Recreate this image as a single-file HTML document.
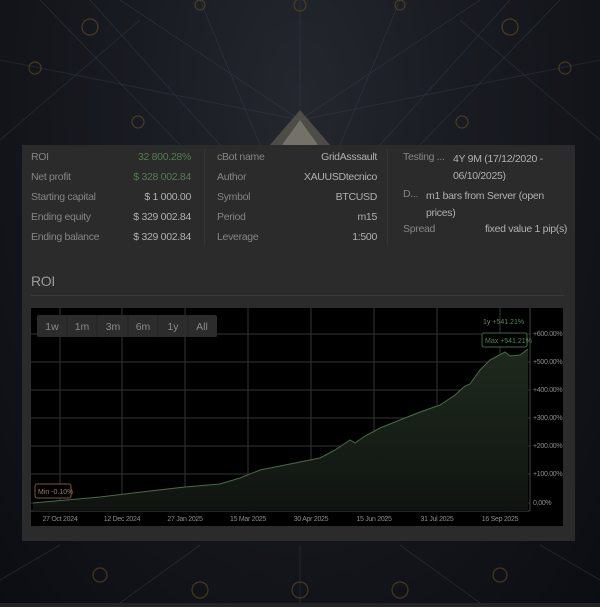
<!DOCTYPE html>
<html><head><meta charset="utf-8"><style>
*{margin:0;padding:0;box-sizing:border-box}
body{width:600px;height:607px;overflow:hidden;background:#121419;font-family:"Liberation Sans",sans-serif;position:relative}
.bg{position:absolute;left:0;top:0;width:600px;height:603px;background:radial-gradient(ellipse at 300px 100px,#24282e 0%,#181b21 40%,#0c0d12 100%)}
.strip{position:absolute;left:0;top:603px;width:600px;height:4px;background:#232323}
.panel{position:absolute;left:22px;top:145px;width:553px;height:396px;background:#2b2b2b}
.t{position:absolute;font-size:10.5px;color:#858585;white-space:nowrap;letter-spacing:-0.3px}
.v{color:#b0b0b0}
.g{color:#4f7d4f}
.sep{position:absolute;width:1px;background:#353535}
</style></head><body>
<div class="bg"></div>
<svg style="position:absolute;left:0;top:0" width="600" height="603">
<g stroke="#33404c" stroke-width="0.6" fill="none" opacity="0.7">
<path d="M300 0 L300 145 M300 120 L120 0 M300 120 L480 0 M300 120 L0 60 M300 120 L600 60 M200 0 L260 145 M400 0 L340 145 M90 0 L220 145 M510 0 L380 145 M0 140 L140 20 M600 140 L460 20 M40 0 L180 145 M560 0 L420 145"/>
<path d="M300 603 L300 545 M120 603 L200 545 M480 603 L400 545 M0 580 L60 545 M600 580 L540 545"/>
</g>
<g stroke="#6a5224" stroke-width="1.2" fill="none" opacity="0.6">
<circle cx="90" cy="27" r="8"/><circle cx="510" cy="27" r="8"/><circle cx="35" cy="68" r="6"/><circle cx="565" cy="68" r="6"/><circle cx="300" cy="5" r="6"/><circle cx="200" cy="5" r="5"/><circle cx="400" cy="5" r="5"/><circle cx="138" cy="122" r="6"/><circle cx="462" cy="122" r="6"/>
<circle cx="100" cy="575" r="7"/><circle cx="500" cy="575" r="7"/><circle cx="200" cy="590" r="8"/><circle cx="300" cy="590" r="8"/><circle cx="400" cy="590" r="8"/>
</g>
<path d="M300 110 L270 145 L330 145Z" fill="#6a6658" opacity="0.6"/>
<path d="M300 120 L282 145 L318 145Z" fill="#9a968a" opacity="0.5"/>
</svg>
<div class="strip"></div>
<div class="panel">
<div class="t" style="left:9px;top:6px">ROI</div><div class="t g" style="right:384px;top:6px">32 800.28%</div>
<div class="t" style="left:9px;top:26px">Net profit</div><div class="t g" style="right:384px;top:26px">$ 328 002.84</div>
<div class="t" style="left:9px;top:46px">Starting capital</div><div class="t v" style="right:384px;top:46px">$ 1 000.00</div>
<div class="t" style="left:9px;top:66px">Ending equity</div><div class="t v" style="right:384px;top:66px">$ 329 002.84</div>
<div class="t" style="left:9px;top:86px">Ending balance</div><div class="t v" style="right:384px;top:86px">$ 329 002.84</div>
<div class="sep" style="left:182px;top:4px;height:96px"></div>
<div class="t" style="left:195px;top:6px">cBot name</div><div class="t v" style="right:198px;top:6px">GridAsssault</div>
<div class="t" style="left:195px;top:26px">Author</div><div class="t v" style="right:198px;top:26px">XAUUSDtecnico</div>
<div class="t" style="left:195px;top:46px">Symbol</div><div class="t v" style="right:198px;top:46px">BTCUSD</div>
<div class="t" style="left:195px;top:66px">Period</div><div class="t v" style="right:198px;top:66px">m15</div>
<div class="t" style="left:195px;top:86px">Leverage</div><div class="t v" style="right:198px;top:86px">1:500</div>
<div class="sep" style="left:365px;top:4px;height:96px"></div>
<div class="t" style="left:381px;top:6px">Testing ...</div><div class="t v" style="left:431px;top:6px;line-height:17px">4Y 9M (17/12/2020 -<br>06/10/2025)</div>
<div class="t" style="left:381px;top:43px">D...</div><div class="t v" style="left:404px;top:43px;line-height:17px">m1 bars from Server (open<br>prices)</div>
<div class="t" style="left:381px;top:78px">Spread</div><div class="t v" style="left:463px;top:78px">fixed value 1 pip(s)</div>
<div class="t" style="left:9px;top:128px;font-size:14px;color:#9a9a9a">ROI</div>
<div style="position:absolute;left:9px;top:150px;width:533px;height:1px;background:#3a3a3a"></div>
</div>
<svg style="position:absolute;left:31px;top:308px" width="532" height="218" font-family="Liberation Sans" >
<defs><linearGradient id="f" x1="0" y1="0" x2="0" y2="1"><stop offset="0" stop-color="#1e2a1e"/><stop offset="1" stop-color="#101410"/></linearGradient></defs>
<rect width="532" height="218" fill="#000"/>
<g stroke="#333" stroke-width="1">
<path d="M0 26H499M0 54H499M0 82H499M0 110H499M0 138H499M0 166H499M0 195H499"/>
<path d="M29 0V203M91 0V203M154 0V203M217 0V203M280 0V203M343 0V203M406 0V203M469 0V203"/>
</g>
<path d="M0 203H499M499 0V203" stroke="#444" stroke-width="1"/>
<path d="M2 195 L69 189 L119 183 L154 179 L189 176 L209 170 L229 162 L259 156 L289 150 L304 142 L319 132 L324 135 L334 128 L349 120 L369 112 L389 104 L409 97 L424 87 L434 78 L439 76 L449 62 L459 52 L474 44 L479 48 L489 47 L497 41 L497 203 L2 203Z" fill="url(#f)"/>
<path d="M2 195 L69 189 L119 183 L154 179 L189 176 L209 170 L229 162 L259 156 L289 150 L304 142 L319 132 L324 135 L334 128 L349 120 L369 112 L389 104 L409 97 L424 87 L434 78 L439 76 L449 62 L459 52 L474 44 L479 48 L489 47 L497 41" fill="none" stroke="#4a6a4a" stroke-width="1"/>
<g font-size="7" fill="#8a8a8a" letter-spacing="-0.3">
<text x="502" y="28">+600.00%</text><text x="502" y="56">+500.00%</text><text x="502" y="84">+400.00%</text><text x="502" y="112">+300.00%</text><text x="502" y="140">+200.00%</text><text x="502" y="168">+100.00%</text><text x="502" y="197">0.00%</text>
<text x="29" y="213" text-anchor="middle">27 Oct 2024</text><text x="91" y="213" text-anchor="middle">12 Dec 2024</text><text x="154" y="213" text-anchor="middle">27 Jan 2025</text><text x="217" y="213" text-anchor="middle">15 Mar 2025</text><text x="280" y="213" text-anchor="middle">30 Apr 2025</text><text x="343" y="213" text-anchor="middle">15 Jun 2025</text><text x="406" y="213" text-anchor="middle">31 Jul 2025</text><text x="469" y="213" text-anchor="middle">16 Sep 2025</text>
</g>
<text x="452" y="16" font-size="7" fill="#7a8a7a">1y <tspan fill="#4f8a4f">+541.21%</tspan></text>
<rect x="451" y="25" width="45" height="14" fill="#000" stroke="#3f6a3f" rx="2"/>
<text x="454" y="35" font-size="7" fill="#4f8a4f">Max +541.21%</text>
<rect x="4" y="176" width="36" height="14" fill="#000" stroke="#7a5a30" rx="2"/>
<text x="7" y="186" font-size="7" fill="#a07a50">Min -0.10%</text>
<rect x="6" y="7" width="180" height="22" fill="#2c2c2c" rx="2"/>
<g stroke="#222"><path d="M36 7V29M66 7V29M97 7V29M127 7V29M157 7V29"/></g>
<g font-size="10.5" fill="#8a8a8a" text-anchor="middle"><text x="21" y="22">1w</text><text x="51" y="22">1m</text><text x="82" y="22">3m</text><text x="112" y="22">6m</text><text x="142" y="22">1y</text><text x="171" y="22">All</text></g>
</svg>
</body></html>
